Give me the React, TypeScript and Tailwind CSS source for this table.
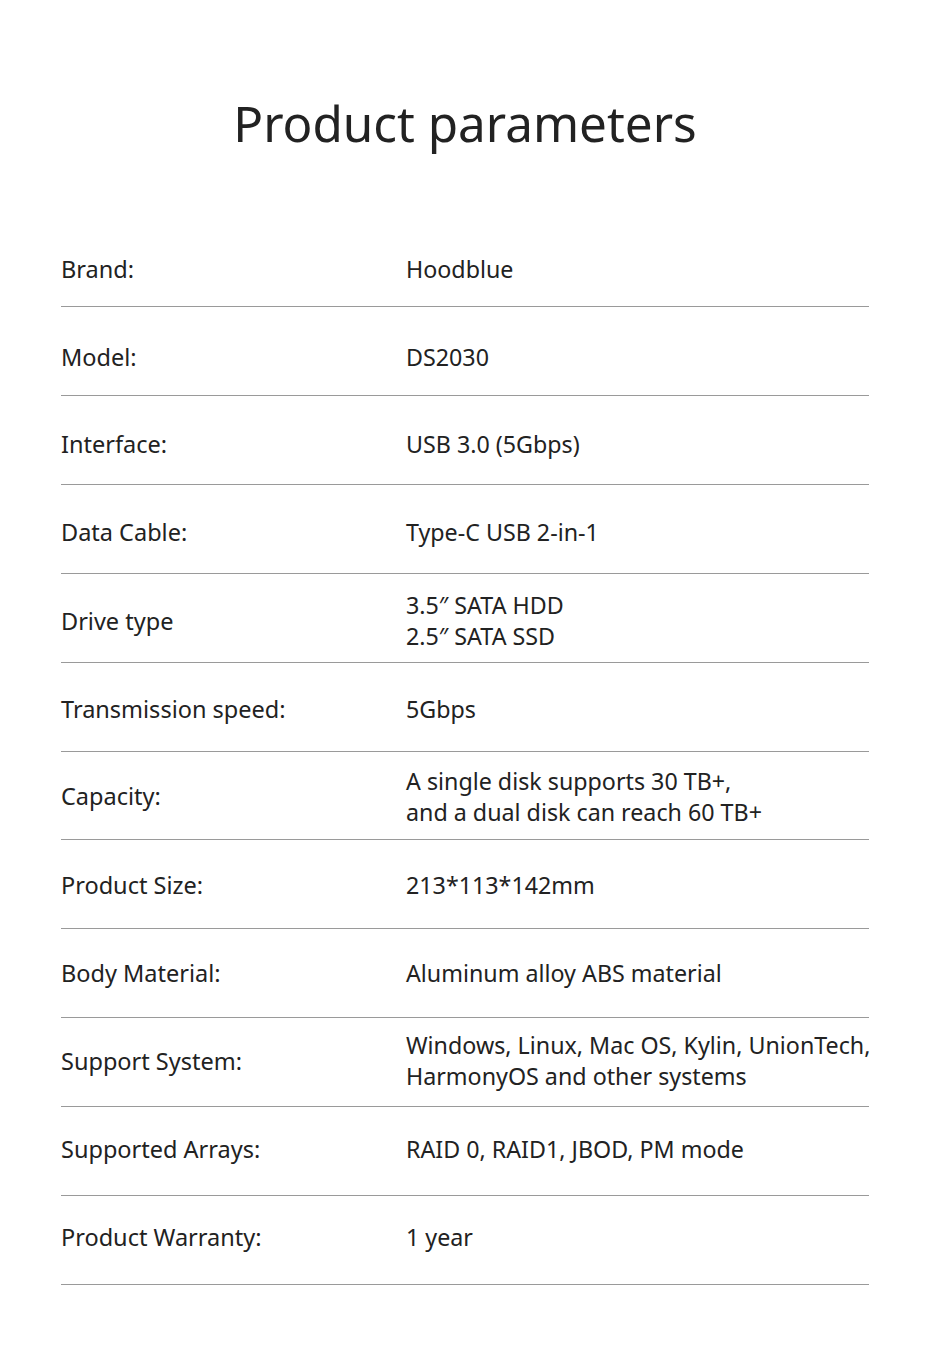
import React from "react";

const rows: { label: string; value: string[]; h: string }[] = [
  { label: "Brand:", value: ["Hoodblue"], h: "h-[89px] pt-[14px]" },
  { label: "Model:", value: ["DS2030"], h: "h-[89px] pt-[12px]" },
  { label: "Interface:", value: ["USB 3.0 (5Gbps)"], h: "h-[89px] pt-[8px]" },
  { label: "Data Cable:", value: ["Type-C USB 2-in-1"], h: "h-[89px] pt-[6px]" },
  { label: "Drive type", value: ["3.5\u2033 SATA HDD", "2.5\u2033 SATA SSD"], h: "h-[89px] pt-[6px]" },
  { label: "Transmission speed:", value: ["5Gbps"], h: "h-[89px] pt-[4px]" },
  {
    label: "Capacity:",
    value: ["A single disk supports 30 TB+,", "and a dual disk can reach 60 TB+"],
    h: "h-[88px] pt-[2px]",
  },
  { label: "Product Size:", value: ["213*113*142mm"], h: "h-[89px] pt-[2px]" },
  { label: "Body Material:", value: ["Aluminum alloy ABS material"], h: "h-[89px]" },
  {
    label: "Support System:",
    value: ["Windows, Linux, Mac OS, Kylin, UnionTech,", "HarmonyOS and other systems"],
    h: "h-[89px] pb-[2px]",
  },
  { label: "Supported Arrays:", value: ["RAID 0, RAID1, JBOD, PM mode"], h: "h-[89px] pb-[4px]" },
  { label: "Product Warranty:", value: ["1 year"], h: "h-[89px] pb-[6px]" },
];

export default function App() {
  return (
    <div
      className="w-[930px] h-[1346px] bg-white text-[#222222]"
      style={{ fontFamily: '"Noto Sans", "Open Sans", sans-serif' }}
    >
      <div className="h-[218px] pt-[88px] flex justify-center">
        <h1 className="text-[49.4px] leading-[70px] font-normal">Product parameters</h1>
      </div>
      <div className="pl-[61px] pr-[61px]">
        {rows.map((r) => (
          <div
            key={r.label}
            className={`${r.h} flex items-center border-b border-[#9a9a9a]`}
          >
            <div className="w-[345px] shrink-0 text-[23.5px] leading-[31px]">{r.label}</div>
            <div className="min-w-0 text-[23.25px] leading-[31px] whitespace-nowrap">
              {r.value.map((v) => (
                <div key={v}>{v}</div>
              ))}
            </div>
          </div>
        ))}
      </div>
    </div>
  );
}
